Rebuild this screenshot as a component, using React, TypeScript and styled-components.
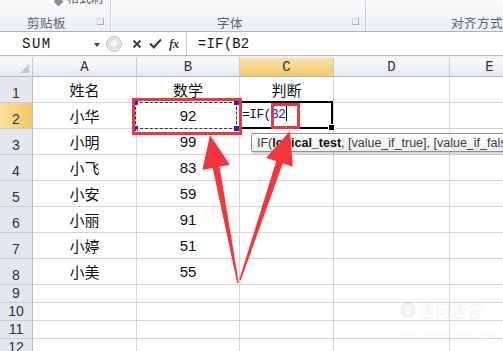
import * as React from "react";
import styled, { createGlobalStyle, css } from "styled-components";

const GlobalStyle = createGlobalStyle`
  html, body {
    margin: 0;
    padding: 0;
    width: 503px;
    height: 351px;
    overflow: hidden;
    background: #ffffff;
  }
`;

const CJK = `"Noto Sans CJK SC", "Noto Sans", sans-serif`;
const MONO = `"Liberation Mono", "Noto Sans CJK SC", monospace`;
const SANS = `"Liberation Sans", Arial, sans-serif`;

const Root = styled.div`
  position: relative;
  width: 503px;
  height: 351px;
  overflow: hidden;
  font-family: ${CJK};
`;

/* ---------- ribbon ---------- */

const Ribbon = styled.div`
  height: 31px;
  display: flex;
  background: linear-gradient(#fafbfc, #eceff3);
  border-bottom: 1px solid #aab3be;
`;

const Group = styled.div<{ $width?: number }>`
  position: relative;
  display: flex;
  flex-direction: column;
  justify-content: space-between;
  ${(p) =>
    p.$width
      ? css`
          width: ${p.$width}px;
          flex: none;
        `
      : css`
          flex: 1;
        `}
  border-right: 1px solid #c9ced6;
  box-shadow: 1px 0 0 #ffffff;
`;

const GroupTop = styled.div`
  height: 12px;
  overflow: hidden;
  display: flex;
  align-items: flex-end;
  gap: 5px;
  padding-left: 55px;
`;

const CutItem = styled.span`
  font-size: 12px;
  line-height: 12px;
  color: #555;
  margin-bottom: 8px;
`;

const PasteIcon = styled.span`
  width: 7px;
  height: 7px;
  margin-bottom: 7px;
  background: #8c8f94;
  transform: rotate(45deg);
`;

const GroupLabel = styled.div<{ $pad: number }>`
  height: 18px;
  display: flex;
  align-items: center;
  padding-left: ${(p) => p.$pad}px;
  font-size: 12.5px;
  color: #5e6268;
  letter-spacing: 0.5px;
  white-space: nowrap;
`;

const Launcher = styled.span`
  position: absolute;
  right: 6px;
  bottom: 6px;
  width: 5px;
  height: 5px;
  border: 1px solid #a8adb4;
  border-left-color: #d4d7db;
  border-top-color: #d4d7db;
  background: #eef0f2;
`;

/* ---------- formula bar ---------- */

const FormulaBar = styled.div`
  height: 23px;
  display: flex;
  align-items: stretch;
  background: #ffffff;
  border-bottom: 1px solid #b7bcc4;
`;

const NameBox = styled.div`
  width: 104px;
  flex: none;
  display: flex;
  align-items: center;
  justify-content: space-between;
  padding: 0 4px 0 22px;
  box-sizing: border-box;
  font-family: ${MONO};
  font-size: 14px;
  letter-spacing: 1.5px;
  color: #111;
`;

const DropArrow = styled.span`
  width: 0;
  height: 0;
  border-left: 3.5px solid transparent;
  border-right: 3.5px solid transparent;
  border-top: 4px solid #444;
  margin-top: 2px;
`;

const Grip = styled.span`
  width: 14px;
  height: 14px;
  flex: none;
  align-self: center;
  margin-left: 2px;
  border-radius: 50%;
  border: 1px solid #bfc4cb;
  background: radial-gradient(circle at 50% 45%, #f4f5f7 0 3px, #d9dce1 4px, #eceef1 8px);
`;

const FxButtons = styled.div`
  display: flex;
  align-items: center;
  gap: 7px;
  padding: 0 7px 0 10px;
  border-right: 1px solid #c4c8ce;
`;

const FxText = styled.span`
  font-family: "Liberation Serif", serif;
  font-style: italic;
  font-weight: bold;
  font-size: 13px;
  color: #3d3d3d;
  letter-spacing: -0.5px;
`;

const FormulaInput = styled.div`
  flex: 1;
  display: flex;
  align-items: center;
  padding-left: 11px;
  font-family: ${MONO};
  font-size: 14px;
  letter-spacing: 0.2px;
  color: #111;
`;

const Spacer = styled.div`
  height: 2px;
  background: #eef0f3;
`;

/* ---------- sheet ---------- */

const Sheet = styled.div`
  display: grid;
  grid-template-columns: 33px 104px 103px 94px 116px 80px;
  grid-template-rows: 19px repeat(8, 26px) repeat(4, 18px);
`;

const HeaderCell = styled.div<{ $active?: boolean }>`
  display: flex;
  align-items: center;
  justify-content: center;
  box-sizing: border-box;
  border-right: 1px solid #c5cad1;
  border-bottom: 1px solid #b5bbc3;
  font-family: ${MONO};
  font-size: 14px;
  color: #333;
  background: ${(p) =>
    p.$active
      ? "linear-gradient(#fbe3a9, #f3c86f)"
      : "linear-gradient(#fbfcfc, #e6e9ed)"};
`;

const Corner = styled(HeaderCell)`
  position: relative;
  &::after {
    content: "";
    position: absolute;
    right: 3px;
    bottom: 3px;
    border-left: 9px solid transparent;
    border-bottom: 9px solid #c3c8cf;
  }
`;

const RowHead = styled.div<{ $active?: boolean }>`
  display: flex;
  align-items: flex-end;
  justify-content: center;
  padding-bottom: 1px;
  box-sizing: border-box;
  border-right: 1px solid #b5bbc3;
  border-bottom: 1px solid #c9ced5;
  font-family: ${SANS};
  font-size: 14px;
  color: #333;
  background: ${(p) =>
    p.$active ? "linear-gradient(90deg, #fbe0a0, #f3c565)" : "#e4e7eb"};
`;

const Cell = styled.div<{ $num?: boolean }>`
  position: relative;
  display: flex;
  align-items: flex-end;
  justify-content: center;
  padding-bottom: 3px;
  box-sizing: border-box;
  border-right: 1px solid #d6d6d6;
  border-bottom: 1px solid #d6d6d6;
  font-family: ${(p) => (p.$num ? SANS : CJK)};
  font-size: 15px;
  line-height: 18px;
  color: #111;
`;

const FormulaCell = styled(Cell)`
  justify-content: flex-start;
  padding: 0 0 4px 2px;
  font-family: ${MONO};
  font-size: 13px;
  letter-spacing: -0.6px;
  overflow: visible;
`;

const RefText = styled.span`
  color: #2626c4;
`;

const TextCaret = styled.span`
  display: inline-block;
  width: 1px;
  height: 15px;
  background: #000;
  margin-left: 1px;
  vertical-align: -3px;
`;

const Ants = styled.div`
  position: absolute;
  top: -1px;
  left: -2px;
  right: 2px;
  bottom: -1px;
  border: 1.5px dashed #24248e;
  background: #efe27a;
  pointer-events: none;
  z-index: 0;
`;

const AntsInner = styled.div`
  width: 100%;
  height: 100%;
  background: #ffffff;
`;

const Handle = styled.span<{ $top?: boolean; $left?: boolean }>`
  position: absolute;
  width: 5px;
  height: 5px;
  background: #2323c6;
  ${(p) => (p.$top ? "top: -3px;" : "bottom: -3px;")}
  ${(p) => (p.$left ? "left: -3px;" : "right: -3px;")}
`;

const CellValue = styled.span`
  position: relative;
  z-index: 1;
`;

const RedBox = styled.div<{ $t: number; $l: number; $w: number; $h: number }>`
  position: absolute;
  top: ${(p) => p.$t}px;
  left: ${(p) => p.$l}px;
  width: ${(p) => p.$w}px;
  height: ${(p) => p.$h}px;
  border: 3px solid #e53b3e;
  box-sizing: border-box;
  z-index: 3;
  pointer-events: none;
`;

const ActiveBorder = styled.div`
  position: absolute;
  top: -2px;
  left: -1px;
  right: 0;
  bottom: -1px;
  border: 2px solid #000;
  z-index: 2;
  &::after {
    content: "";
    position: absolute;
    right: -4px;
    bottom: -4px;
    width: 5px;
    height: 5px;
    background: #000;
    border: 1px solid #fff;
  }
`;

/* ---------- overlays ---------- */

const Tooltip = styled.div`
  position: absolute;
  left: 251px;
  top: 133px;
  height: 19px;
  padding: 0 6px 0 5px;
  display: flex;
  align-items: center;
  white-space: nowrap;
  box-sizing: border-box;
  border: 1px solid #8d9196;
  border-radius: 2px;
  background: linear-gradient(#ffffff, #eceef1);
  box-shadow: 1px 2px 2px rgba(0, 0, 0, 0.18);
  font-family: "Liberation Sans", Arial, sans-serif;
  font-size: 12.5px;
  color: #3c3c3c;
  z-index: 4;
`;

const Bold = styled.b`
  color: #111;
`;

const Overlay = styled.svg`
  position: absolute;
  left: 0;
  top: 0;
  z-index: 5;
  pointer-events: none;
`;

const Watermark = styled.div`
  position: absolute;
  left: 400px;
  top: 298px;
  display: flex;
  flex-direction: column;
  gap: 7px;
  color: rgba(120, 120, 120, 0.08);
  z-index: 1;
`;

const MarkTitle = styled.div`
  display: flex;
  align-items: center;
  gap: 3px;
  font-size: 16px;
  font-weight: bold;
`;

const MarkLogo = styled.span`
  width: 16px;
  height: 16px;
  border-radius: 50%;
  background: rgba(120, 120, 120, 0.1);
  color: #fff;
  font-size: 11px;
  display: flex;
  align-items: center;
  justify-content: center;
  font-family: ${SANS};
`;

const MarkSub = styled.div`
  font-size: 6px;
  letter-spacing: 0.3px;
`;

const rows: [string, string, string][] = [
  ["姓名", "数学", "判断"],
  ["小华", "92", ""],
  ["小明", "99", ""],
  ["小飞", "83", ""],
  ["小安", "59", ""],
  ["小丽", "91", ""],
  ["小婷", "51", ""],
  ["小美", "55", ""],
  ["", "", ""],
  ["", "", ""],
  ["", "", ""],
  ["", "", ""],
];

function Arrow({ tail, tip }: { tail: [number, number]; tip: [number, number] }) {
  const dx = tip[0] - tail[0];
  const dy = tip[1] - tail[1];
  const len = Math.hypot(dx, dy);
  const ux = dx / len;
  const uy = dy / len;
  const px = -uy;
  const py = ux;
  const head = 33;
  const bx = tip[0] - ux * head;
  const by = tip[1] - uy * head;
  const pt = (x: number, y: number) => `${x.toFixed(1)},${y.toFixed(1)}`;
  const points = [
    pt(tip[0], tip[1]),
    pt(bx + px * 14, by + py * 14),
    pt(bx + px * 3.5, by + py * 3.5),
    pt(tail[0] + px * 0.8, tail[1] + py * 0.8),
    pt(tail[0] - px * 0.8, tail[1] - py * 0.8),
    pt(bx - px * 3.5, by - py * 3.5),
    pt(bx - px * 14, by - py * 14),
  ].join(" ");
  return <polygon points={points} fill="#f2363b" />;
}

export default function App() {
  return (
    <Root>
      <GlobalStyle />
      <Ribbon>
        <Group $width={110}>
          <GroupTop>
            <PasteIcon />
            <CutItem>格式刷</CutItem>
          </GroupTop>
          <GroupLabel $pad={27}>剪贴板</GroupLabel>
          <Launcher />
        </Group>
        <Group $width={254}>
          <GroupTop />
          <GroupLabel $pad={106}>字体</GroupLabel>
          <Launcher />
        </Group>
        <Group>
          <GroupTop />
          <GroupLabel $pad={85}>对齐方式</GroupLabel>
        </Group>
      </Ribbon>

      <FormulaBar>
        <NameBox>
          SUM
          <DropArrow />
        </NameBox>
        <Grip />
        <FxButtons>
          <svg width="10" height="10" viewBox="0 0 10 10">
            <path d="M1.5 1.5 L8.5 8.5 M8.5 1.5 L1.5 8.5" stroke="#3f3f3f" strokeWidth="2" />
          </svg>
          <svg width="13" height="11" viewBox="0 0 13 11">
            <path d="M1 5.5 L4.8 9.3 L12 1.5" stroke="#3f3f3f" strokeWidth="2.2" fill="none" />
          </svg>
          <FxText>fx</FxText>
        </FxButtons>
        <FormulaInput>=IF(B2</FormulaInput>
      </FormulaBar>
      <Spacer />

      <Sheet>
        <Corner />
        {["A", "B", "C", "D", "E"].map((c) => (
          <HeaderCell key={c} $active={c === "C"}>
            {c}
          </HeaderCell>
        ))}
        {rows.map((r, i) => {
          const n = i + 1;
          return (
            <React.Fragment key={n}>
              <RowHead $active={n === 2}>{n}</RowHead>
              <Cell>{r[0]}</Cell>
              {n === 2 ? (
                <Cell $num>
                  <Ants>
                    <AntsInner />
                    <Handle $top $left />
                    <Handle $left />
                    <Handle $top />
                    <Handle />
                  </Ants>
                  <CellValue>{r[1]}</CellValue>
                  <RedBox $t={-5} $l={-5} $w={110} $h={37} />
                </Cell>
              ) : (
                <Cell $num={n > 1}>{r[1]}</Cell>
              )}
              {n === 2 ? (
                <FormulaCell>
                  <ActiveBorder />
                  <CellValue>
                    =IF(<RefText>B2</RefText>
                    <TextCaret />
                  </CellValue>
                  <RedBox $t={0} $l={31} $w={29} $h={26} />
                </FormulaCell>
              ) : (
                <Cell>{r[2]}</Cell>
              )}
              <Cell />
              <Cell />
            </React.Fragment>
          );
        })}
      </Sheet>

      <Tooltip>
        IF(<Bold>logical_test</Bold>, [value_if_true], [value_if_false])
      </Tooltip>

      <Watermark>
        <MarkTitle>
          <MarkLogo>S</MarkLogo>
          速问速答
        </MarkTitle>
        <MarkSub>www.shenmawenda.com 速问速答平台</MarkSub>
      </Watermark>

      <Overlay width="503" height="351" viewBox="0 0 503 351">
        <Arrow tail={[238, 283]} tip={[210, 135]} />
        <Arrow tail={[240, 280]} tip={[290, 131]} />
      </Overlay>
    </Root>
  );
}
